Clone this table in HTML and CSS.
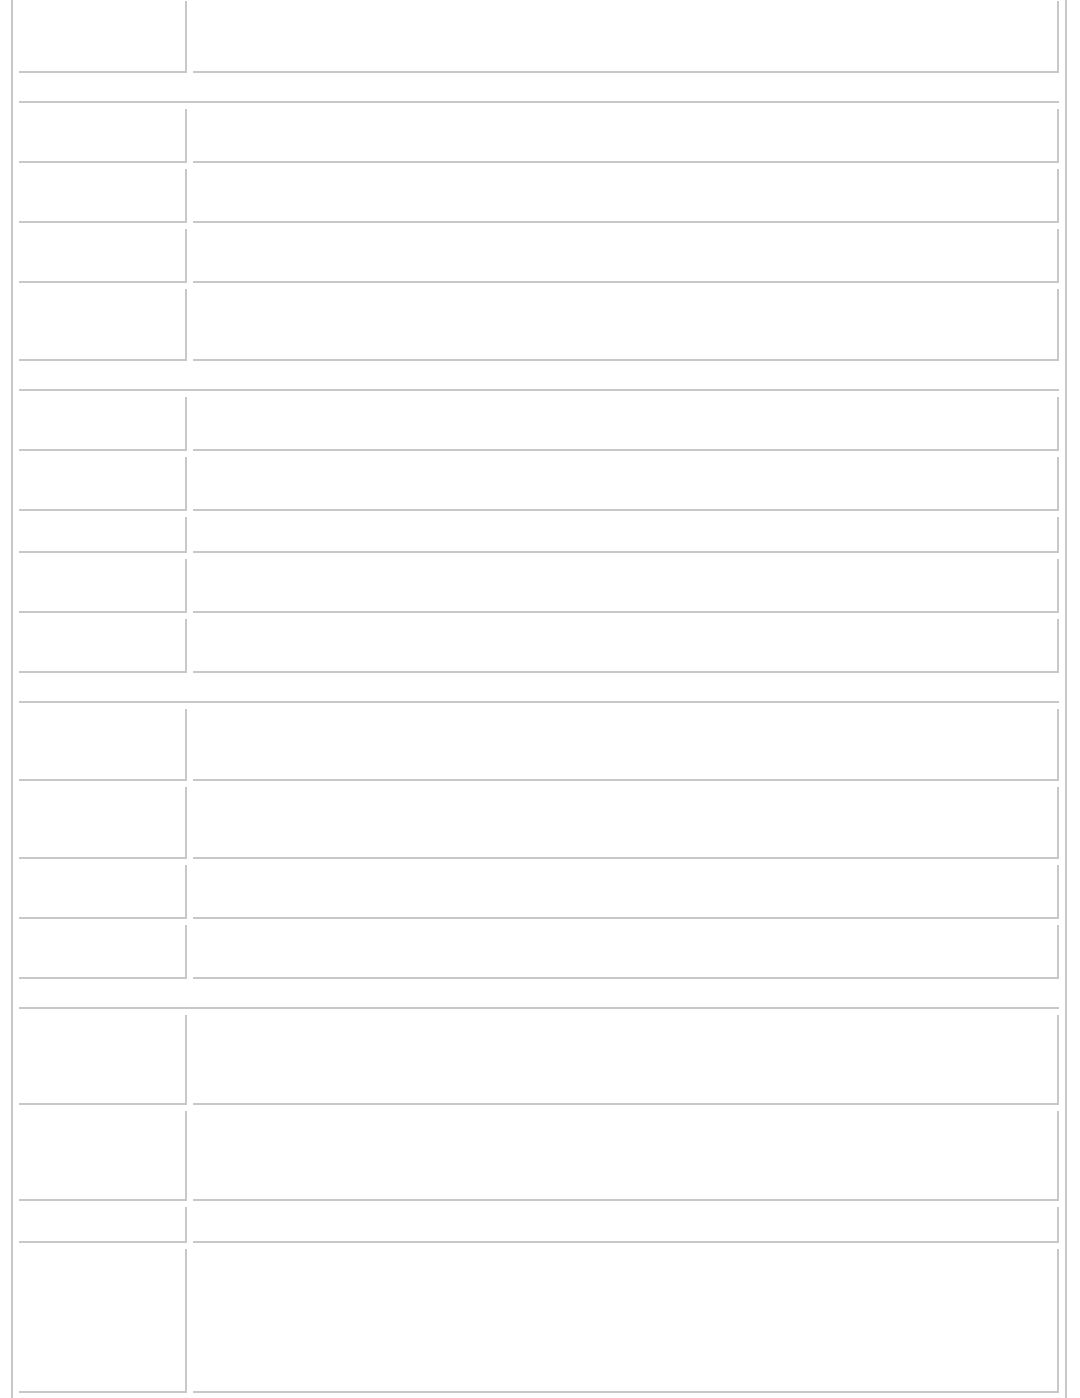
FILE: index.html
```html
<!DOCTYPE html>
<html lang="en">
<head>
    <meta charset="UTF-8">
    <meta name="viewport" content="width=device-width, initial-scale=1.0">
    <title>Form</title>
    <link rel="stylesheet" href="styles.css">
</head>
<body>
    <table class="sheet">
        <tr class="r4"><td class="label"></td><td class="value"></td></tr>
        <tr class="sep"><td colspan="2"></td></tr>

        <tr class="r3"><td class="label"></td><td class="value"></td></tr>
        <tr class="r3"><td class="label"></td><td class="value"></td></tr>
        <tr class="r3"><td class="label"></td><td class="value"></td></tr>
        <tr class="r4"><td class="label"></td><td class="value"></td></tr>
        <tr class="sep"><td colspan="2"></td></tr>

        <tr class="r3"><td class="label"></td><td class="value"></td></tr>
        <tr class="r3"><td class="label"></td><td class="value"></td></tr>
        <tr class="r2"><td class="label"></td><td class="value"></td></tr>
        <tr class="r3"><td class="label"></td><td class="value"></td></tr>
        <tr class="r3"><td class="label"></td><td class="value"></td></tr>
        <tr class="sep"><td colspan="2"></td></tr>

        <tr class="r4"><td class="label"></td><td class="value"></td></tr>
        <tr class="r4"><td class="label"></td><td class="value"></td></tr>
        <tr class="r3"><td class="label"></td><td class="value"></td></tr>
        <tr class="r3"><td class="label"></td><td class="value"></td></tr>
        <tr class="sep"><td colspan="2"></td></tr>

        <tr class="r5"><td class="label"></td><td class="value"></td></tr>
        <tr class="r5"><td class="label"></td><td class="value"></td></tr>
        <tr class="r2"><td class="label"></td><td class="value"></td></tr>
        <tr class="r8"><td class="label"></td><td class="value"></td></tr>
    </table>
</body>
</html>
```

FILE: styles.css
```css
html {
    overflow: hidden;
}

body {
    margin: 0;
    background: #ffffff;
    font-family: "Liberation Sans", Arial, sans-serif;
    font-size: 13px;
}

.sheet {
    width: 1056px;
    margin: -7px 0 0 11px;
    table-layout: fixed;
    border-collapse: separate;
    border-spacing: 6px;
    border: 2px solid #c8c8c8;
}

.sheet td {
    padding: 0;
    border-right: 2px solid #c8c8c8;
    border-bottom: 2px solid #c8c8c8;
}

.sheet td.label {
    width: 166px;
}

.sheet .sep td {
    height: 22px;
    border-right: none;
}

.r2 td { height: 34px; }
.r3 td { height: 52px; }
.r4 td { height: 70px; }
.r5 td { height: 88px; }
.r8 td { height: 142px; }
```
